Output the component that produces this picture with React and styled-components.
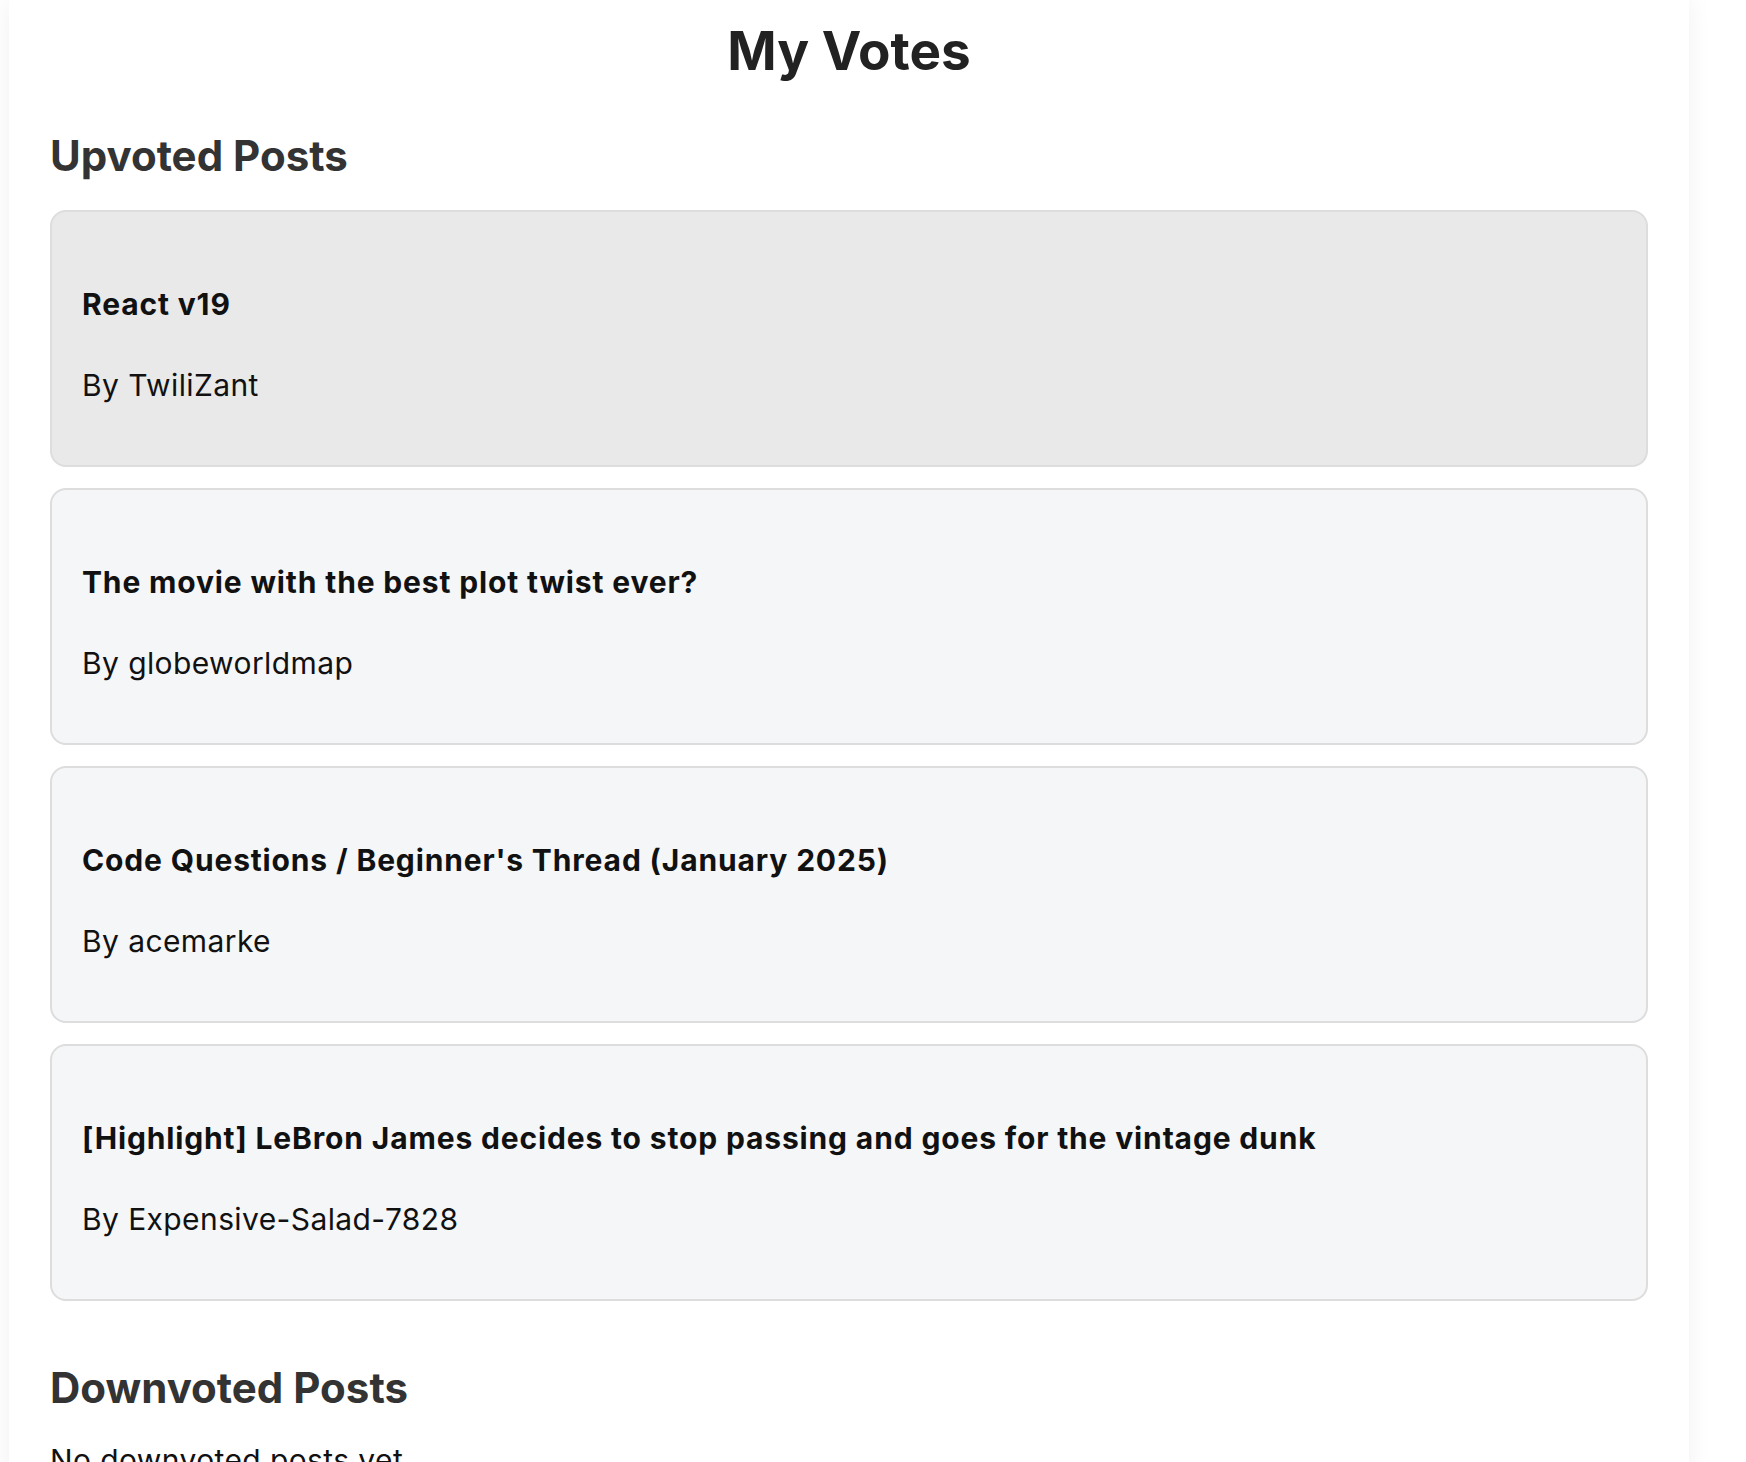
import React from "react";
import styled, { createGlobalStyle } from "styled-components";

const GlobalStyle = createGlobalStyle`
  html, body {
    margin: 0;
    padding: 0;
    background: #ffffff;
    font-family: Inter, "Noto Sans", "Liberation Sans", sans-serif;
  }
`;

const upvoted = [
  { id: 1, title: "React v19", author: "TwiliZant", active: true },
  { id: 2, title: "The movie with the best plot twist ever?", author: "globeworldmap" },
  { id: 3, title: "Code Questions / Beginner's Thread (January 2025)", author: "acemarke" },
  { id: 4, title: "[Highlight] LeBron James decides to stop passing and goes for the vintage dunk", author: "Expensive-Salad-7828" },
];

const Page = styled.div`
  width: 1680px;
  margin-left: 9px;
  min-height: 1462px;
  box-sizing: border-box;
  padding: 19px 41px 40px;
  background: #ffffff;
  box-shadow: 0 0 24px rgba(0, 0, 0, 0.06);
`;

const Title = styled.h1`
  margin: 0 0 47px;
  text-align: center;
  font-size: 53px;
  font-weight: 700;
  color: #222222;
`;

const SectionTitle = styled.h2`
  margin: 0 0 29px;
  font-size: 42px;
  font-weight: 700;
  color: #333333;
`;

const Section = styled.section`
  margin-bottom: 61px;
`;

const CardList = styled.div`
  display: flex;
  flex-direction: column;
  gap: 21px;
`;

const Card = styled.div`
  border: 2px solid #dddddd;
  border-radius: 16px;
  padding: 30px 30px;
  background: ${(p) => (p.$active ? "#e9e9e9" : "#f5f6f8")};
`;

const CardTitle = styled.h3`
  margin: 44px 0 45px;
  font-size: 30px;
  font-weight: 700;
  letter-spacing: 0.85px;
  color: #111111;
`;

const Author = styled.p`
  margin: 0 0 32px;
  font-size: 30px;
  letter-spacing: 0.4px;
  color: #111111;
`;

const Empty = styled.p`
  margin: 0;
  font-size: 30px;
  letter-spacing: 0.4px;
  color: #111111;
`;

export default function App() {
  return (
    <>
      <GlobalStyle />
      <Page>
        <Title>My Votes</Title>
        <Section>
          <SectionTitle>Upvoted Posts</SectionTitle>
          <CardList>
            {upvoted.map((post) => (
              <Card key={post.id} $active={post.active}>
                <CardTitle>{post.title}</CardTitle>
                <Author>By {post.author}</Author>
              </Card>
            ))}
          </CardList>
        </Section>
        <div>
          <SectionTitle>Downvoted Posts</SectionTitle>
          <Empty>No downvoted posts yet.</Empty>
        </div>
      </Page>
    </>
  );
}
